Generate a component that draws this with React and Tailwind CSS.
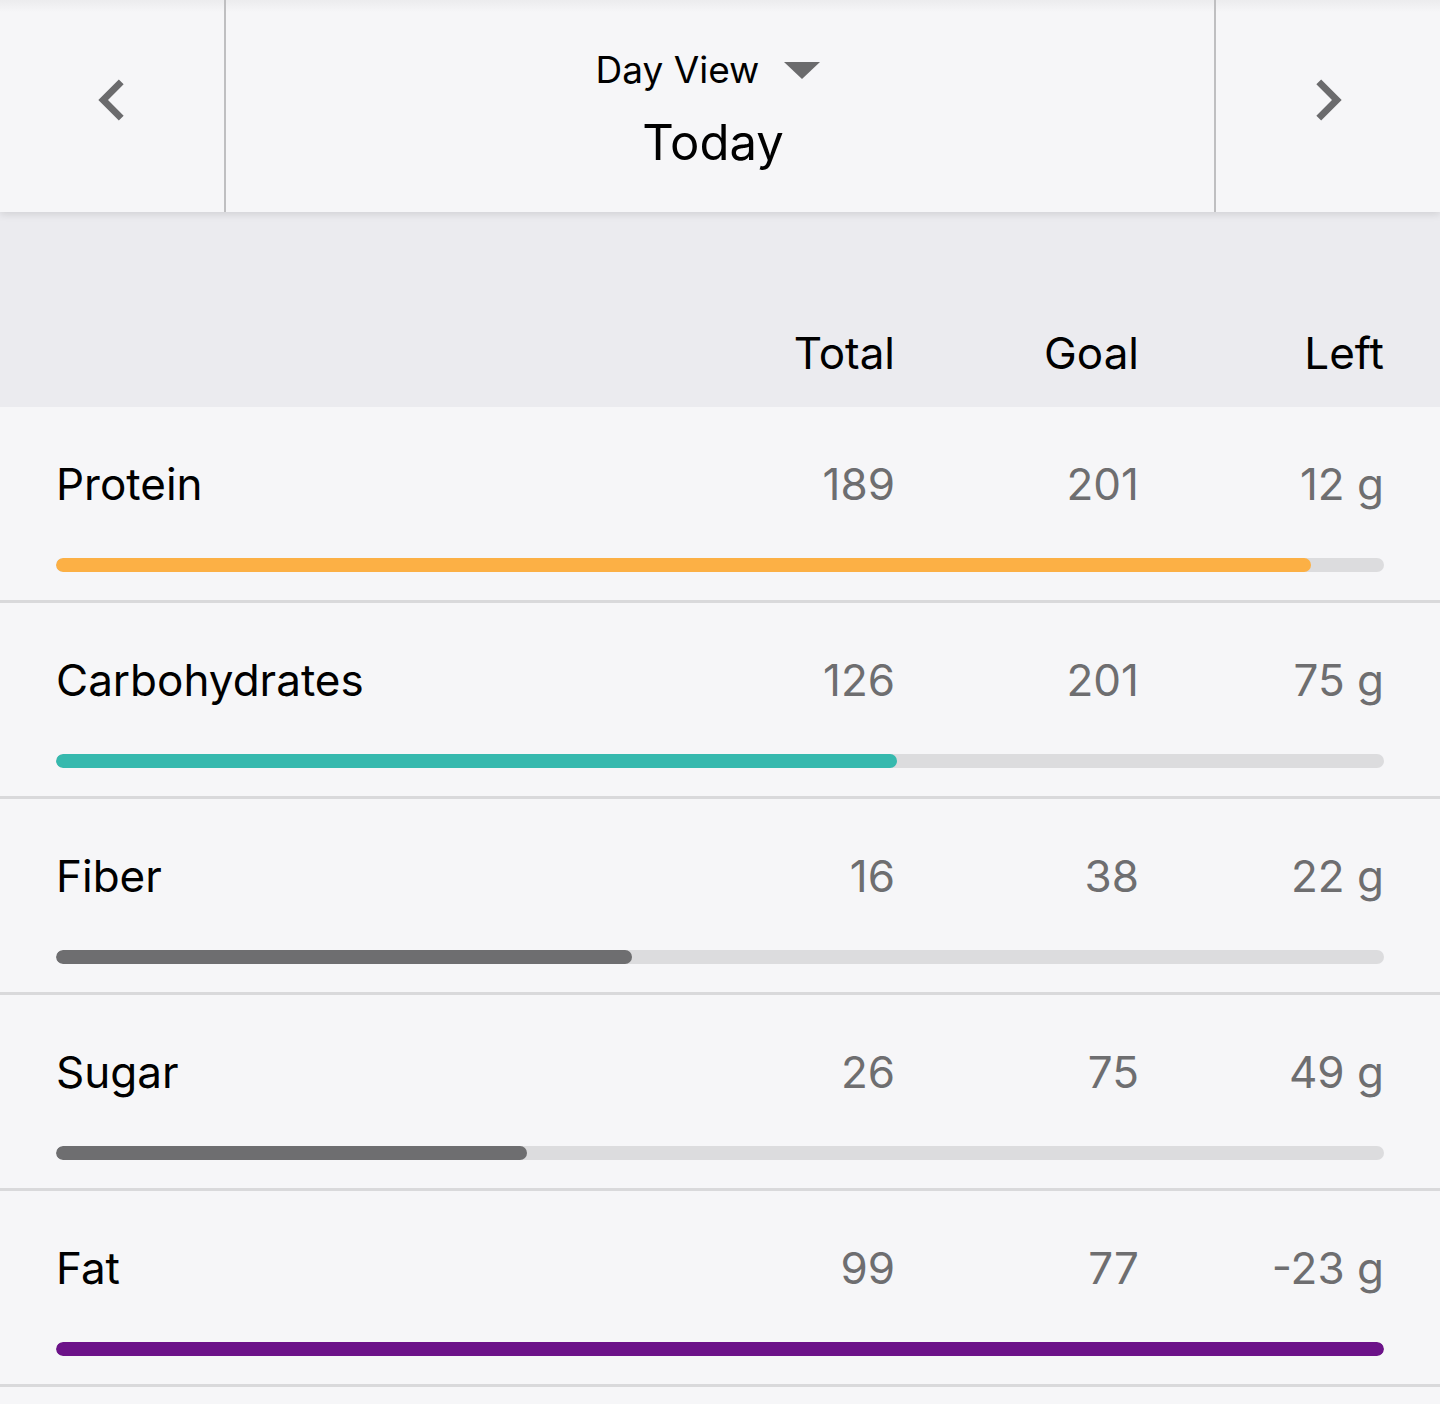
import React from 'react';

const NUTRIENTS = [
  { name: 'Protein', total: 189, goal: 201, left: '12 g', pct: 94.5, color: 'bg-[#fcb045]' },
  { name: 'Carbohydrates', total: 126, goal: 201, left: '75 g', pct: 63.3, color: 'bg-[#36b9ae]' },
  { name: 'Fiber', total: 16, goal: 38, left: '22 g', pct: 43.4, color: 'bg-[#6e6e70]' },
  { name: 'Sugar', total: 26, goal: 75, left: '49 g', pct: 35.5, color: 'bg-[#6e6e70]' },
  { name: 'Fat', total: 99, goal: 77, left: '-23 g', pct: 100, color: 'bg-[#6c1289]' },
];

const Chevron = ({ dir }) => (
  <svg viewBox="0 0 24 24" className="w-[82px] h-[82px] text-[#6b6b6d]" fill="currentColor">
    {dir === 'left' ? (
      <path d="M15.41 7.41 14 6l-6 6 6 6 1.41-1.41L10.83 12z" />
    ) : (
      <path d="M8.59 16.59 10 18l6-6-6-6-1.41 1.41L13.17 12z" />
    )}
  </svg>
);

const NutrientRow = ({ item }) => (
  <div className="px-[56px] pt-[55px] pb-[28px] border-b-[3px] border-[#d9d9db]">
    <div className="flex items-center text-[44px] leading-none">
      <div className="flex-1 text-black">{item.name}</div>
      <div className="w-[200px] text-right text-[#6e6e70]">{item.total}</div>
      <div className="w-[244px] text-right text-[#6e6e70]">{item.goal}</div>
      <div className="w-[245px] text-right text-[#6e6e70]">{item.left}</div>
    </div>
    <div className="mt-[52px] h-[14px] rounded-full bg-[#dcdcde] overflow-hidden">
      <div className={`h-full rounded-full ${item.color}`} style={{ width: `${item.pct}%` }} />
    </div>
  </div>
);

export default function App() {
  return (
    <div className="min-h-screen bg-[#f6f6f8] font-['Inter',sans-serif] antialiased">
      {/* barra de navegación de fecha */}
      <div className="relative z-10 flex h-[212px] bg-[linear-gradient(to_bottom,#ececee_0px,#efeff1_4px,#f6f6f8_12px)] shadow-[0_2px_8px_rgba(0,0,0,0.12)]">
        <div className="w-[226px] flex justify-center pt-[59px] border-r-2 border-[#bfbfc1]">
          <Chevron dir="left" />
        </div>
        <div className="flex-1 flex flex-col items-center pt-[51px] pr-[14px]">
          <div className="flex items-center mr-[10px] text-[37px] leading-none text-black">
            <span>Day View</span>
            <svg viewBox="0 0 36 18" className="ml-[25px] w-[36px] h-[18px] text-[#6b6b6d]" fill="currentColor">
              <path d="M0 1h36L18 18z" />
            </svg>
          </div>
          <div className="mt-[30px] text-[49px] leading-none text-black">Today</div>
        </div>
        <div className="w-[226px] flex justify-center pt-[59px] border-l-2 border-[#bfbfc1]">
          <Chevron dir="right" />
        </div>
      </div>

      {/* encabezados de columnas */}
      <div className="h-[195px] bg-[#ebebef] flex items-end px-[56px] pb-[32px] text-[44px] leading-none text-black">
        <div className="flex-1" />
        <div className="w-[200px] text-right">Total</div>
        <div className="w-[244px] text-right">Goal</div>
        <div className="w-[245px] text-right">Left</div>
      </div>

      {NUTRIENTS.map((item) => (
        <NutrientRow key={item.name} item={item} />
      ))}
    </div>
  );
}
